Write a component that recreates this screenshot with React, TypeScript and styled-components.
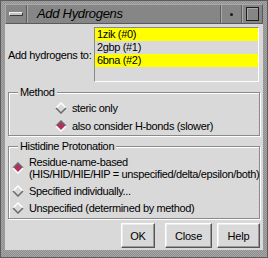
import React from 'react';
import styled, { createGlobalStyle } from 'styled-components';

const BG = '#d9d9d9';
const DARK = '#8a8a8a';
const MAROON = '#b03060';

const GlobalStyle = createGlobalStyle`
  html, body {
    margin: 0;
    padding: 0;
    background: ${BG};
  }
  body {
    font-family: "Liberation Sans", Arial, sans-serif;
    color: #000;
  }
`;

const molecules = [
  { name: '1zik (#0)', selected: true },
  { name: '2gbp (#1)', selected: false },
  { name: '6bna (#2)', selected: true },
];

function Diamond({ on }: { on: boolean }) {
  const upper = on ? '#6b6b6b' : '#ffffff';
  const lower = on ? '#ffffff' : '#6b6b6b';
  return (
    <RadioMark width="12" height="12" viewBox="0 0 12 12">
      <polygon points="6,1 11,6 6,11 1,6" fill={on ? MAROON : BG} />
      <polyline points="1,6 6,1 11,6" fill="none" stroke={upper} strokeWidth="1.5" />
      <polyline points="1,6 6,11 11,6" fill="none" stroke={lower} strokeWidth="1.5" />
    </RadioMark>
  );
}

export default function App() {
  return (
    <>
      <GlobalStyle />
      <Frame>
        <TitleBar>
          <MenuButton>
            <MenuBar />
          </MenuButton>
          <Title>Add Hydrogens</Title>
          <TitleButton>
            <Dot />
          </TitleButton>
          <TitleButton>
            <MaxBox />
          </TitleButton>
        </TitleBar>

        <Content>
          <TopRow>
            <Text>Add hydrogens to:</Text>
            <ListBox>
              {molecules.map((m) => (
                <ListRow key={m.name} $selected={m.selected}>
                  {m.name}
                </ListRow>
              ))}
            </ListBox>
          </TopRow>

          <Group $padBottom={0}>
            <Legend>Method</Legend>
            <CenterColumn>
              <RadioRow $tall>
                <Diamond on={false} />
                <Text>steric only</Text>
              </RadioRow>
              <RadioRow $tall>
                <Diamond on />
                <Text>also consider H-bonds (slower)</Text>
              </RadioRow>
            </CenterColumn>
          </Group>

          <Group $padBottom={2}>
            <Legend>Histidine Protonation</Legend>
            <RadioRow>
              <Diamond on />
              <Text>
                Residue-name-based
                <br />
                (HIS/HID/HIE/HIP = unspecified/delta/epsilon/both)
              </Text>
            </RadioRow>
            <RadioRow>
              <Diamond on={false} />
              <Text>Specified individually...</Text>
            </RadioRow>
            <RadioRow>
              <Diamond on={false} />
              <Text>Unspecified (determined by method)</Text>
            </RadioRow>
          </Group>

          <ButtonRow>
            <Button $w={34} $isDefault>
              OK
            </Button>
            <Button $w={47}>Close</Button>
            <Button $w={43}>Help</Button>
          </ButtonRow>
        </Content>
      </Frame>
    </>
  );
}

const Frame = styled.div`
  width: 268px;
  height: 258px;
  box-sizing: border-box;
  padding: 3px 4px 7px 4px;
  display: flex;
  flex-direction: column;
  border: 1px solid #5c5c5c;
  background-color: #a6a6a6;
  background-image: repeating-conic-gradient(#8e8e8e 0 25%, transparent 0 50%);
  background-size: 2px 2px;
`;

const TitleBar = styled.div`
  height: 20px;
  flex-shrink: 0;
  display: flex;
  box-sizing: border-box;
  background: #868686;
  border-top: 1px solid #a9a9a9;
  border-left: 1px solid #a9a9a9;
  border-bottom: 1px solid #5a5a5a;
  border-right: 1px solid #5a5a5a;
`;

const MenuButton = styled.div`
  width: 20px;
  display: flex;
  align-items: center;
  justify-content: center;
  border-right: 1px solid #5e5e5e;
`;

const MenuBar = styled.div`
  width: 12px;
  height: 2px;
  background: #c4c4c4;
  border: 1px solid;
  border-color: #f0f0f0 #3c3c3c #3c3c3c #f0f0f0;
`;

const Title = styled.div`
  flex: 1;
  padding-left: 9px;
  font-size: 13px;
  font-style: italic;
  letter-spacing: -0.3px;
  line-height: 18px;
  border-left: 1px solid #a9a9a9;
`;

const TitleButton = styled.div`
  width: 20px;
  display: flex;
  align-items: center;
  justify-content: center;
  border-left: 1px solid #5e5e5e;
  box-shadow: inset 1px 0 0 #a9a9a9;
`;

const Dot = styled.div`
  width: 3px;
  height: 3px;
  border-radius: 50%;
  background: #1a1a1a;
`;

const MaxBox = styled.div`
  width: 11px;
  height: 12px;
  border: 1px solid #1e1e1e;
  box-shadow: inset 1px 1px 0 #a9a9a9;
`;

const Content = styled.div`
  flex: 1;
  display: flex;
  flex-direction: column;
  background: ${BG};
`;

const Text = styled.span`
  font-size: 11px;
  line-height: 12px;
  letter-spacing: -0.35px;
  white-space: nowrap;
`;

const TopRow = styled.div`
  display: flex;
  align-items: center;
  padding: 3px 4px 0 3px;
`;

const ListBox = styled.div`
  margin-left: auto;
  width: 165px;
  height: 55px;
  box-sizing: border-box;
  display: flex;
  flex-direction: column;
  border: 1px solid;
  border-color: ${DARK} #fff #fff ${DARK};
`;

const ListRow = styled.div<{ $selected: boolean }>`
  height: 13px;
  line-height: 13px;
  padding-left: 2px;
  font-size: 11px;
  letter-spacing: -0.35px;
  white-space: nowrap;
  background: ${({ $selected }) => ($selected ? '#ffff00' : 'transparent')};
`;

const Group = styled.fieldset<{ $padBottom: number }>`
  margin: 4px 3px 0 3px;
  padding: 1px 3px ${({ $padBottom }) => $padBottom}px 3px;
  min-width: 0;
  display: flex;
  flex-direction: column;
  border: 1px solid ${DARK};
  box-shadow: inset 1px 1px 0 #fff, 1px 1px 0 #fff;
`;

const Legend = styled.legend`
  margin-left: 6px;
  padding: 0 2px;
  font-size: 11px;
  line-height: 12px;
  letter-spacing: -0.35px;
  background: ${BG};
`;

const CenterColumn = styled.div`
  align-self: center;
  display: flex;
  flex-direction: column;
`;

const RadioRow = styled.div<{ $tall?: boolean }>`
  display: flex;
  align-items: center;
  padding: ${({ $tall }) => ($tall ? '3px 0 3px' : '3px 0 2px')};
`;

const RadioMark = styled.svg`
  flex-shrink: 0;
  margin-right: 5px;
`;

const ButtonRow = styled.div`
  display: flex;
  justify-content: flex-end;
  gap: 5px;
  margin-top: 4px;
  padding-right: 3px;
`;

const Button = styled.button<{ $w: number; $isDefault?: boolean }>`
  width: ${({ $w }) => $w}px;
  height: 25px;
  margin-right: ${({ $isDefault }) => ($isDefault ? '5px' : '0')};
  padding: 0;
  font-family: "Liberation Sans", Arial, sans-serif;
  font-size: 11px;
  letter-spacing: -0.2px;
  color: #000;
  background: ${BG};
  border: 1px solid;
  border-color: #fff #555 #555 #fff;
  box-shadow: inset -1px -1px 0 #9a9a9a, inset 1px 1px 0 #ececec;
`;
